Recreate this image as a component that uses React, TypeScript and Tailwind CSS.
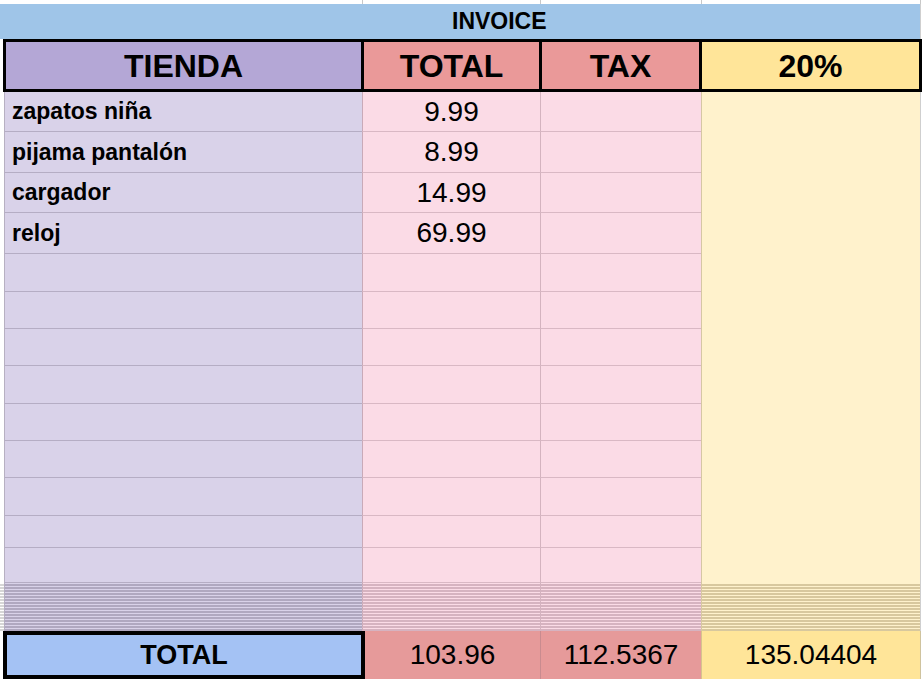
import React from 'react';

const items = [
  { name: 'zapatos niña', total: '9.99', h: 'h-[40px]' },
  { name: 'pijama pantalón', total: '8.99', h: 'h-[41px]' },
  { name: 'cargador', total: '14.99', h: 'h-[40px]' },
  { name: 'reloj', total: '69.99', h: 'h-[41px]' },
];

const emptyRows = ['h-[38px]', 'h-[37px]', 'h-[37px]', 'h-[38px]', 'h-[37px]', 'h-[37px]', 'h-[38px]', 'h-[32px]', 'h-[35px]'];

const Row: React.FC<{ h: string; name?: string; total?: string }> = ({ h, name, total }) => (
  <div className={`flex ${h}`}>
    <div className="w-[4px] shrink-0" />
    <div className="w-[358px] shrink-0 flex items-center pl-[7px] bg-[#d9d2e9] border-l border-b border-l-[#b7b0c2] border-b-[#b5adc4] text-[23px] font-bold">
      {name}
    </div>
    <div className="w-[178px] shrink-0 flex items-center justify-center bg-[#fbdbe6] border-l border-b border-l-[#c9aab8] border-b-[#d9b8c4] text-[28px]">
      {total}
    </div>
    <div className="w-[161px] shrink-0 bg-[#fbdbe6] border-l border-b border-l-[#d4b3bf] border-b-[#d9b8c4]" />
    <div className="w-[219px] shrink-0 bg-[#fff2cc] border-l border-l-[#d6c7a4]" />
    <div className="w-[3px] shrink-0 border-l border-l-[#cfcfcf]" />
  </div>
);

const Strip: React.FC = () => (
  <div className="flex h-[3px]">
    <div className="w-[4px] shrink-0 border-b-2 border-b-[#d6d6d6]" />
    <div className="w-[358px] shrink-0 bg-[#d9d2e9] border-l border-b-2 border-l-[#b7b0c2] border-b-[#b0a8c0]" />
    <div className="w-[178px] shrink-0 bg-[#fbdbe6] border-l border-b-2 border-l-[#c9aab8] border-b-[#d6b3c0]" />
    <div className="w-[161px] shrink-0 bg-[#fbdbe6] border-l border-b-2 border-l-[#d4b3bf] border-b-[#d6b3c0]" />
    <div className="w-[219px] shrink-0 bg-[#fff2cc] border-l border-b-2 border-l-[#d6c7a4] border-b-[#d8c89e]" />
    <div className="w-[3px] shrink-0 border-l border-l-[#cfcfcf]" />
  </div>
);

export default function App() {
  return (
    <div className="w-[923px] h-[679px] overflow-hidden bg-white text-black font-['Liberation_Sans',Arial,sans-serif] leading-none">
      {/* grid strip above the sheet */}
      <div className="flex h-[4px]">
        <div className="w-[362px] shrink-0" />
        <div className="w-[178px] shrink-0 border-l border-l-[#c8c8c8]" />
        <div className="w-[161px] shrink-0 border-l border-l-[#c8c8c8]" />
        <div className="w-[219px] shrink-0 border-l border-l-[#c8c8c8]" />
        <div className="w-[3px] shrink-0 border-l border-l-[#c8c8c8]" />
      </div>

      {/* INVOICE */}
      <div className="flex h-[35px]">
        <div className="w-[920px] shrink-0 flex items-center pl-[452px] bg-[#9fc5e8] text-[23px] font-bold">INVOICE</div>
        <div className="w-[3px] shrink-0 border-l border-l-[#cfcfcf]" />
      </div>

      {/* header */}
      <div className="flex h-[53px]">
        <div className="w-[3px] shrink-0" />
        <div className="w-[919px] shrink-0 flex border-[3px] border-black text-[32px] font-bold">
          <div className="w-[355px] shrink-0 flex items-center justify-center bg-[#b4a7d6]">TIENDA</div>
          <div className="w-[178px] shrink-0 flex items-center justify-center bg-[#ea9999] border-l-[3px] border-black">TOTAL</div>
          <div className="w-[160px] shrink-0 flex items-center justify-center bg-[#ea9999] border-l-[3px] border-black">TAX</div>
          <div className="w-[220px] shrink-0 flex items-center justify-center bg-[#ffe599] border-l-[3px] border-black">20%</div>
        </div>
      </div>

      {items.map((it, i) => (
        <Row key={i} h={it.h} name={it.name} total={it.total} />
      ))}
      {emptyRows.map((h, i) => (
        <Row key={'e' + i} h={h} />
      ))}

      {/* hidden rows squeezed together */}
      {Array.from({ length: 16 }).map((_, i) => (
        <Strip key={'s' + i} />
      ))}

      {/* totals */}
      <div className="flex h-[48px] text-[28px]">
        <div className="w-[3px] shrink-0" />
        <div className="w-[362px] shrink-0 flex items-center justify-center bg-[#a4c2f4] border-4 border-black font-bold text-[27px]">TOTAL</div>
        <div className="w-[175px] shrink-0 flex items-center justify-center bg-[#e69a9a]">103.96</div>
        <div className="w-[161px] shrink-0 flex items-center justify-center bg-[#e69a9a] border-l border-l-[#c98b8f]">112.5367</div>
        <div className="w-[219px] shrink-0 flex items-center justify-center bg-[#ffe599] border-l border-l-[#d6c38e]">135.04404</div>
        <div className="w-[3px] shrink-0 border-l border-l-[#cfc39e]" />
      </div>
    </div>
  );
}
